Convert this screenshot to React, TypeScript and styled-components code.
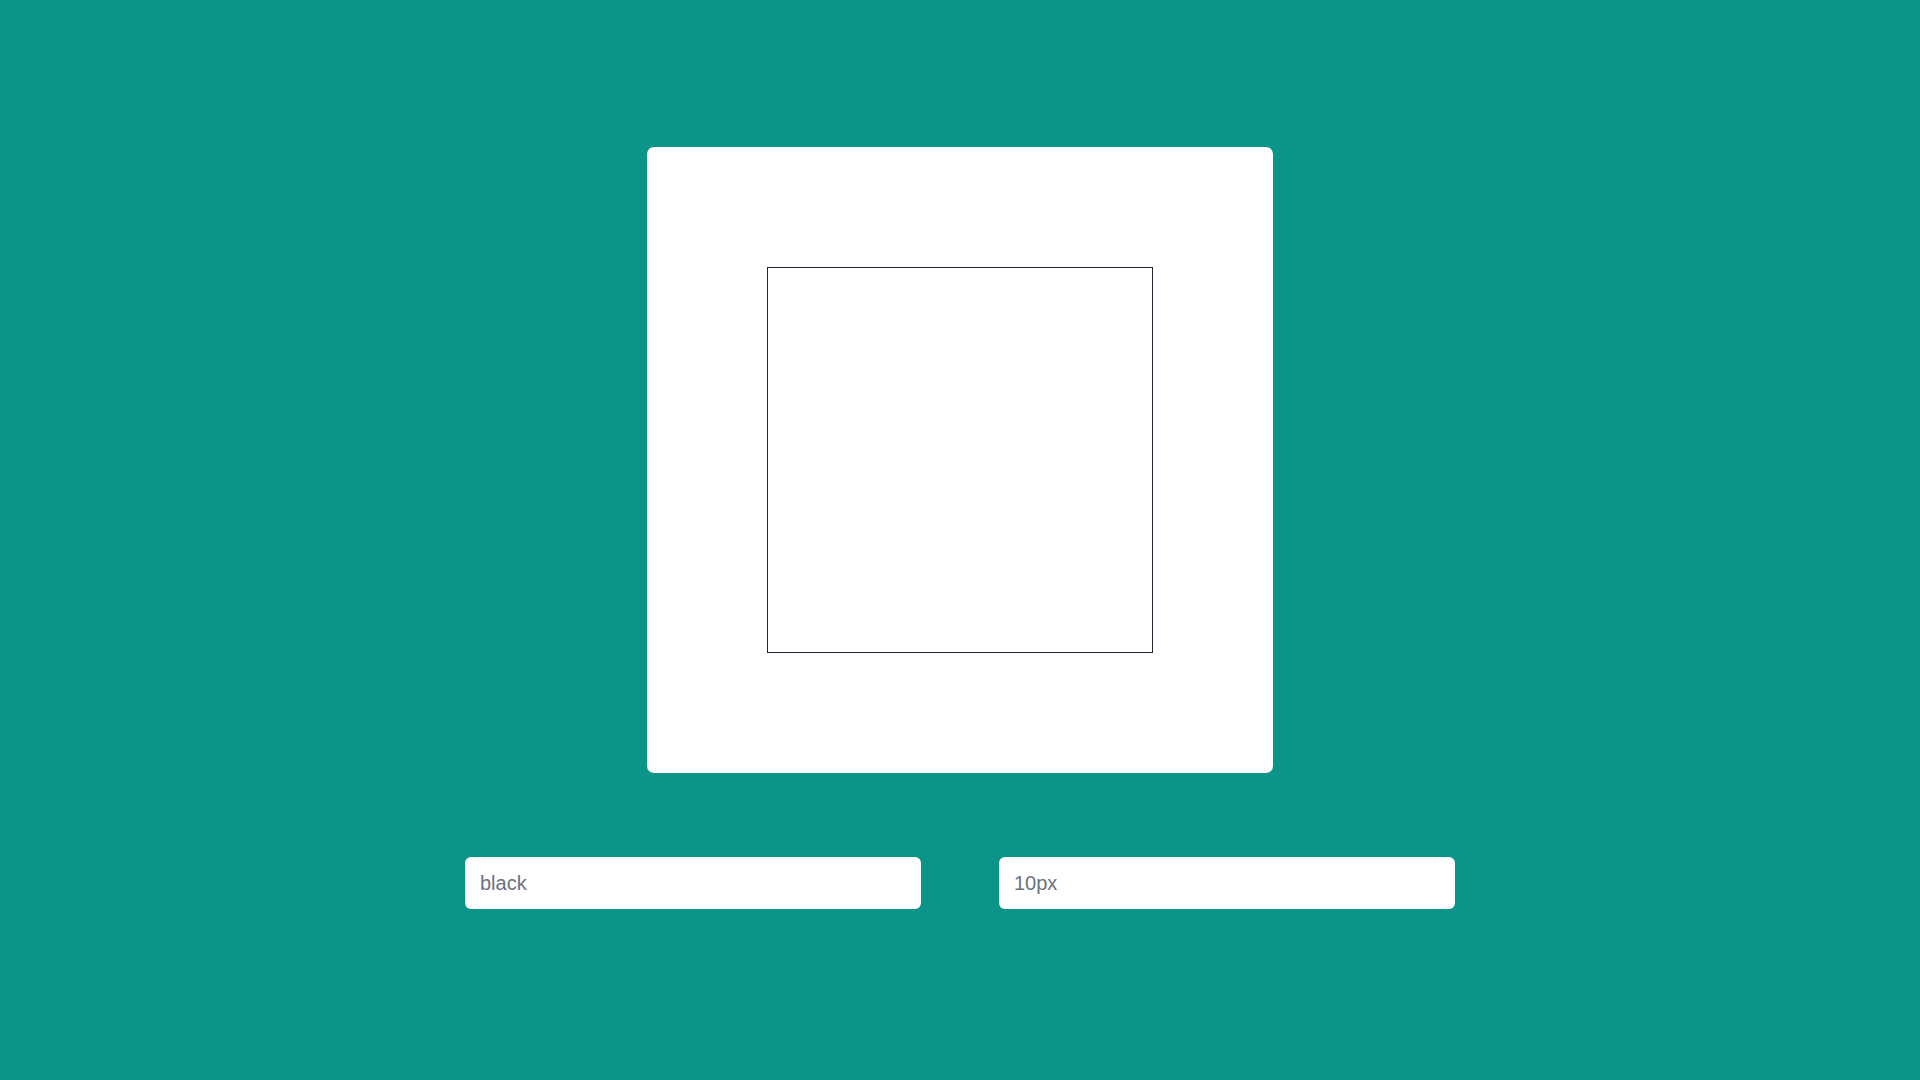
import React from "react";
import styled, { createGlobalStyle } from "styled-components";

const GlobalStyle = createGlobalStyle`
  html, body {
    margin: 0;
    padding: 0;
    background: #0d9488;
    font-family: "Liberation Sans", Arial, sans-serif;
  }
  * { box-sizing: border-box; }
`;

const Page = styled.main`
  min-height: 100vh;
  background: #0d9488;
  display: flex;
  flex-direction: column;
  align-items: center;
  padding-top: 147px;
  gap: 84px;
`;

const Card = styled.div`
  width: 626px;
  height: 626px;
  background: #ffffff;
  border-radius: 7px;
  display: flex;
  align-items: center;
  justify-content: center;
`;

const Box = styled.div`
  width: 386px;
  height: 386px;
  border: 1px solid #1f2937;
  background: #ffffff;
`;

const Controls = styled.div`
  display: flex;
  gap: 78px;
`;

const Field = styled.input`
  width: 456px;
  height: 52px;
  border: none;
  outline: none;
  border-radius: 6px;
  background: #ffffff;
  padding: 0 15px;
  font-family: "Liberation Sans", Arial, sans-serif;
  font-size: 20px;
  color: #6b7280;
  &::placeholder {
    color: #6b7280;
    opacity: 1;
  }
`;

export default function App() {
  return (
    <>
      <GlobalStyle />
      <Page>
        <Card>
          <Box />
        </Card>
        <Controls>
          <Field type="text" placeholder="black" />
          <Field type="text" placeholder="10px" />
        </Controls>
      </Page>
    </>
  );
}
